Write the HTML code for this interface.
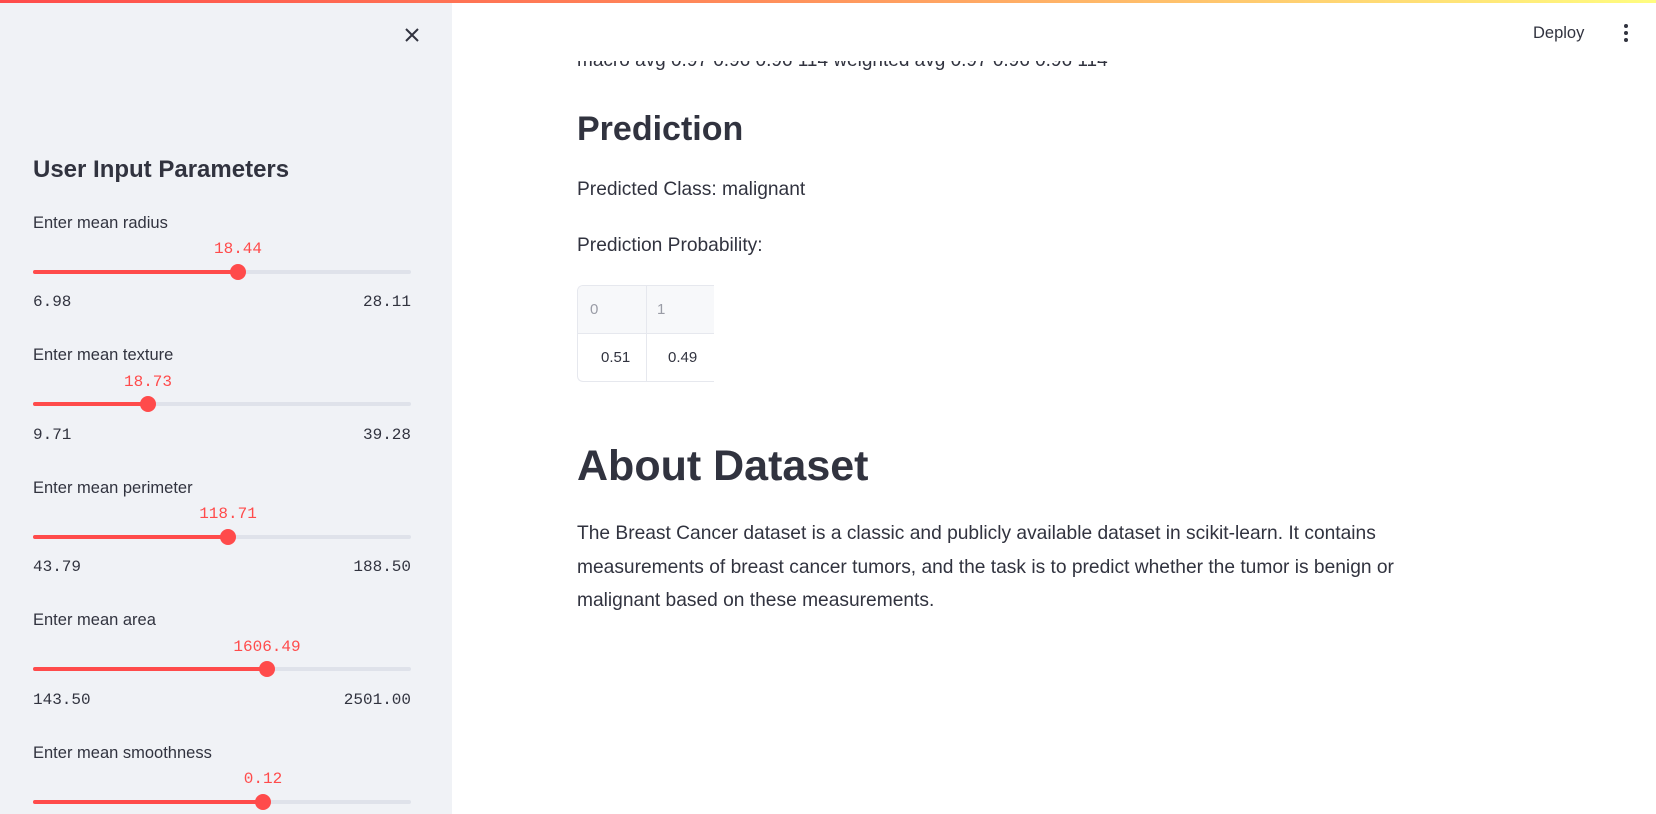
<!DOCTYPE html>
<html><head><meta charset="utf-8"><style>
*{margin:0;padding:0;box-sizing:border-box}
body{width:1656px;height:814px;overflow:hidden;background:#fff;font-family:"Liberation Sans",sans-serif;color:#31333f;position:relative}
.a{position:absolute;white-space:nowrap}
#bar{position:absolute;left:0;top:0;width:1656px;height:3px;background:linear-gradient(90deg,#ff4b4b,#ff8c5a 45%,#fffd80)}
#side{position:absolute;left:0;top:3px;width:452px;height:811px;background:#f0f2f6}
.lbl{font-size:16.5px;color:#31333f}
.val{font-family:"Liberation Mono",monospace;font-size:16px;color:#ff4b4b;transform:translateX(-50%)}
.mm{font-family:"Liberation Mono",monospace;font-size:16px;color:#31333f}
.track{position:absolute;left:33px;width:378px;height:4px;border-radius:2px;background:#dfe2ea}
.fill{position:absolute;left:0;top:0;height:4px;background:#ff4b4b;border-radius:2px}
.thumb{position:absolute;top:-6px;width:16px;height:16px;border-radius:50%;background:#ff4b4b;margin-left:-8px}
p.t{position:absolute;left:577px;font-size:19.2px;line-height:33.5px;width:950px}
</style></head><body>
<div id="side"></div>
<div id="bar"></div>
<svg class="a" style="left:403px;top:26px" width="18" height="18" viewBox="0 0 18 18"><path d="M3 3L15 15M15 3L3 15" stroke="#31333f" stroke-width="2"/></svg>
<div class="a" style="left:33px;top:156px;font-size:24px;font-weight:bold">User Input Parameters</div>

<div class="a lbl" style="left:33px;top:214px">Enter mean radius</div>
<div class="a val" style="left:238px;top:240px">18.44</div>
<div class="track" style="top:270px"><div class="fill" style="width:205px"></div><div class="thumb" style="left:205px"></div></div>
<div class="a mm" style="left:33px;top:293px">6.98</div><div class="a mm" style="right:1245px;top:293px">28.11</div>

<div class="a lbl" style="left:33px;top:346px">Enter mean texture</div>
<div class="a val" style="left:148px;top:373px">18.73</div>
<div class="track" style="top:402px"><div class="fill" style="width:115px"></div><div class="thumb" style="left:115px"></div></div>
<div class="a mm" style="left:33px;top:426px">9.71</div><div class="a mm" style="right:1245px;top:426px">39.28</div>

<div class="a lbl" style="left:33px;top:479px">Enter mean perimeter</div>
<div class="a val" style="left:228px;top:505px">118.71</div>
<div class="track" style="top:535px"><div class="fill" style="width:195px"></div><div class="thumb" style="left:195px"></div></div>
<div class="a mm" style="left:33px;top:558px">43.79</div><div class="a mm" style="right:1245px;top:558px">188.50</div>

<div class="a lbl" style="left:33px;top:611px">Enter mean area</div>
<div class="a val" style="left:267px;top:638px">1606.49</div>
<div class="track" style="top:667px"><div class="fill" style="width:234px"></div><div class="thumb" style="left:234px"></div></div>
<div class="a mm" style="left:33px;top:691px">143.50</div><div class="a mm" style="right:1245px;top:691px">2501.00</div>

<div class="a lbl" style="left:33px;top:744px">Enter mean smoothness</div>
<div class="a val" style="left:263px;top:770px">0.12</div>
<div class="track" style="top:800px"><div class="fill" style="width:230px"></div><div class="thumb" style="left:230px"></div></div>

<div class="a" style="left:577px;top:50px;font-size:19px">macro avg 0.97 0.96 0.96 114 weighted avg 0.97 0.96 0.96 114</div>
<div class="a" style="left:460px;top:3px;width:1196px;height:58px;background:#fff"></div>
<div class="a" style="left:1533px;top:24px;font-size:16.5px">Deploy</div>
<svg class="a" style="left:1620px;top:22px" width="12" height="22"><circle cx="6" cy="4" r="2" fill="#31333f"/><circle cx="6" cy="11" r="2" fill="#31333f"/><circle cx="6" cy="18" r="2" fill="#31333f"/></svg>

<div class="a" style="left:577px;top:110px;font-size:34px;font-weight:bold">Prediction</div>
<div class="a" style="left:577px;top:179px;font-size:19.2px">Predicted Class: malignant</div>
<div class="a" style="left:577px;top:235px;font-size:19.2px">Prediction Probability:</div>
<div class="a" style="left:577px;top:285px;width:137px;height:97px;border:1px solid #e6e8ee;border-right:none;border-radius:6px 0 0 6px;overflow:hidden;font-size:15px">
<div style="position:absolute;left:0;top:0;width:137px;height:48px;background:#f7f8fa;border-bottom:1px solid #e6e8ee"></div>
<div style="position:absolute;left:68px;top:0;width:1px;height:97px;background:#e6e8ee"></div>
<div class="a" style="left:12px;top:15px;color:#9a9ca6">0</div>
<div class="a" style="left:79px;top:15px;color:#9a9ca6">1</div>
<div class="a" style="left:23px;top:63px">0.51</div>
<div class="a" style="left:90px;top:63px">0.49</div>
</div>

<div class="a" style="left:577px;top:442px;font-size:43px;font-weight:bold">About Dataset</div>
<p class="t" style="top:517px">The Breast Cancer dataset is a classic and publicly available dataset in scikit-learn. It contains<br>measurements of breast cancer tumors, and the task is to predict whether the tumor is benign or<br>malignant based on these measurements.</p>
</body></html>
